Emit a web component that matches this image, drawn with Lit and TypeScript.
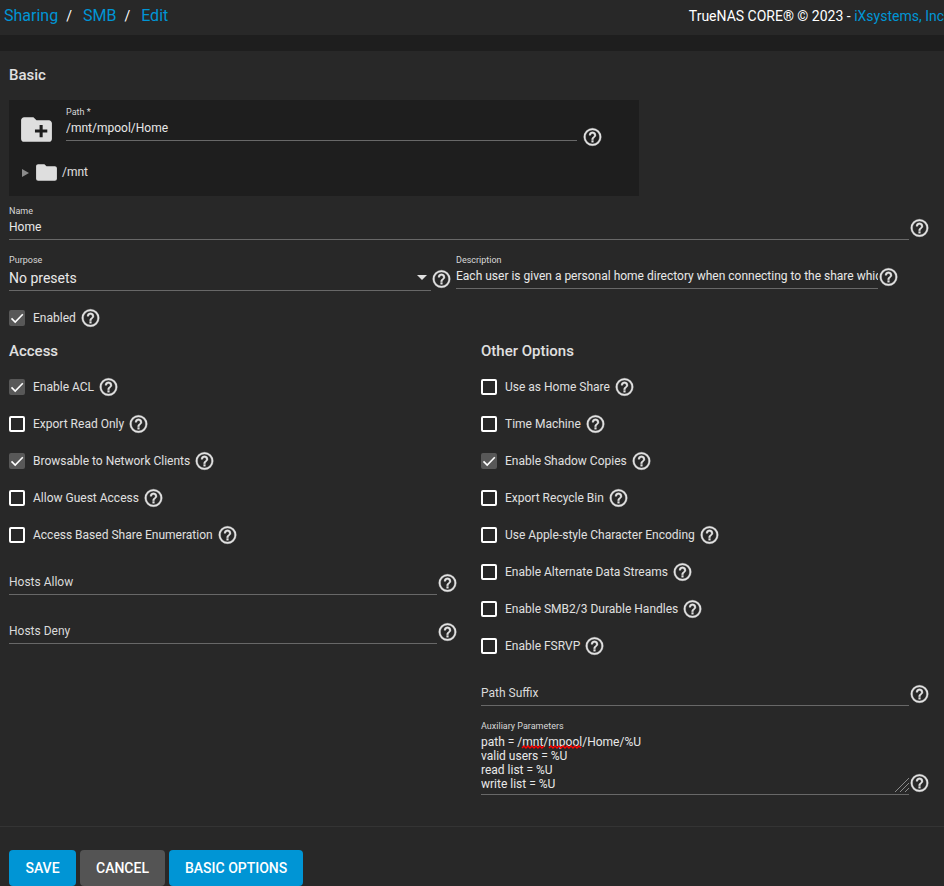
import { LitElement, html, svg, css, nothing } from "lit";
import { customElement, property, state } from "lit/decorators.js";

const PLUS = "M19,14H16V17H14V14H11V12H14V9H16V12H19V14Z";
const FOLDER = "M10,4H4C2.89,4 2,4.89 2,6V18A2,2 0 0,0 4,20H20A2,2 0 0,0 22,18V8C22,6.89 21.1,6 20,6H12L10,4Z";
const HELP =
  "M11,18H13V16H11V18M12,2A10,10 0 0,0 2,12A10,10 0 0,0 12,22A10,10 0 0,0 22,12A10,10 0 0,0 12,2M12,20C7.59,20 4,16.41 4,12C4,7.59 7.59,4 12,4C16.41,4 20,7.59 20,12C20,16.41 16.41,20 12,20M12,6A4,4 0 0,0 8,10H10A2,2 0 0,1 12,8A2,2 0 0,1 14,10C14,12 11,11.75 11,15H13C13,12.75 16,12.5 16,10A4,4 0 0,0 12,6Z";

interface Option {
  id: string;
  label: string;
  checked: boolean;
}

@customElement("help-tip")
export class HelpTip extends LitElement {
  @property() topic = "";

  static styles = css`
    :host {
      display: block;
      flex: none;
    }
    .help {
      display: block;
      padding: 0;
      border: 0;
      background: none;
      color: #e2e2e2;
      cursor: pointer;
    }
    .icon {
      display: block;
      width: 21px;
      height: 22px;
      fill: currentColor;
      stroke: currentColor;
      stroke-width: 0.4;
    }
  `;

  render() {
    return html`<button class="help" type="button" aria-label="Help: ${this.topic}">
      <svg class="icon" viewBox="0 0 24 24" aria-hidden="true"><path d=${HELP} /></svg>
    </button>`;
  }
}

@customElement("app-root")
export class AppRoot extends LitElement {
  @state() private access: Option[] = [
    { id: "acl", label: "Enable ACL", checked: true },
    { id: "ro", label: "Export Read Only", checked: false },
    { id: "browsable", label: "Browsable to Network Clients", checked: true },
    { id: "guest", label: "Allow Guest Access", checked: false },
    { id: "abe", label: "Access Based Share Enumeration", checked: false },
  ];

  @state() private other: Option[] = [
    { id: "home", label: "Use as Home Share", checked: false },
    { id: "timemachine", label: "Time Machine", checked: false },
    { id: "shadow", label: "Enable Shadow Copies", checked: true },
    { id: "recycle", label: "Export Recycle Bin", checked: false },
    { id: "apple", label: "Use Apple-style Character Encoding", checked: false },
    { id: "streams", label: "Enable Alternate Data Streams", checked: false },
    { id: "durable", label: "Enable SMB2/3 Durable Handles", checked: false },
    { id: "fsrvp", label: "Enable FSRVP", checked: false },
  ];

  static styles = css`
    :host {
      display: flex;
      flex-direction: column;
      min-height: 100vh;
      overflow: hidden;
      background: #1e1e1e;
      color: #e0e0e0;
      font-family: Roboto, "Liberation Sans", sans-serif;
      font-size: 12px;
    }
    .topbar {
      display: flex;
      justify-content: space-between;
      align-items: center;
      height: 35px;
      padding-left: 4px;
      margin-bottom: 16px;
      background: #282828;
      white-space: nowrap;
    }
    .crumbs {
      display: flex;
      gap: 11px;
      padding-bottom: 4px;
      font-size: 16px;
      line-height: 20px;
      color: #fff;
    }
    .crumb {
      display: flex;
      align-items: baseline;
      gap: 8px;
    }
    .slash {
      font-size: 14px;
    }
    a {
      color: #0095d5;
      text-decoration: none;
    }
    .copyright {
      padding-bottom: 4px;
      font-size: 14px;
      line-height: 20px;
      color: #fff;
    }
    .card {
      flex: 1;
      background: #282828;
    }
    .body {
      padding: 14px 14px 31px 9px;
    }
    h2 {
      margin: 0 0 15px;
      font-size: 15px;
      font-weight: 500;
      line-height: 20px;
    }
    .explorer {
      box-sizing: border-box;
      width: 100%;
      max-width: 630px;
      padding: 7px 36px 11px 9px;
      margin-bottom: 10px;
      background: #1e1e1e;
    }
    .path {
      display: flex;
      gap: 11px;
      align-items: flex-start;
    }
    .path .field {
      flex: 1;
      gap: 5px;
    }
    .add-folder,
    .toggle {
      display: block;
      padding: 0;
      border: 0;
      background: none;
    }
    .add-folder {
      padding-top: 4px;
    }
    .add-icon {
      display: block;
      width: 37px;
      height: 37px;
    }
    .tree {
      display: flex;
      align-items: center;
      gap: 3px;
      padding-left: 4px;
      margin-top: 12px;
      line-height: 25px;
    }
    .toggle {
      margin-right: 2px;
    }
    .arrow {
      display: block;
      width: 7px;
      height: 8px;
      fill: #8c8c8c;
    }
    .folder-icon {
      display: block;
      width: 25px;
      height: 25px;
    }
    .sheet {
      fill: #dedede;
    }
    .plus {
      fill: #1e1e1e;
    }
    .field {
      display: flex;
      align-items: flex-end;
      min-width: 0;
    }
    .field help-tip {
      margin-bottom: 1px;
    }
    .path .field help-tip {
      margin-bottom: -7px;
    }
    .control {
      position: relative;
      flex: 1;
      min-width: 0;
      border-bottom: 1px solid #686868;
    }
    .caption {
      display: block;
      height: 10px;
      font-size: 9px;
      line-height: 10px;
      color: #d8d8d8;
    }
    .text,
    .select,
    .area {
      display: block;
      box-sizing: border-box;
      width: 100%;
      margin: 0;
      padding: 0;
      border: 0;
      border-radius: 0;
      outline: none;
      appearance: none;
      background: none;
      color: #e8e8e8;
      font: inherit;
    }
    .text {
      height: 23px;
      padding-bottom: 1px;
    }
    .text::placeholder {
      color: #dadada;
      opacity: 1;
    }
    .select {
      height: 25px;
      font-size: 14px;
    }
    .caret {
      position: absolute;
      right: 4px;
      bottom: 10px;
      width: 10px;
      height: 5px;
      fill: #e0e0e0;
      pointer-events: none;
    }
    .area {
      height: 63px;
      padding-top: 4px;
      line-height: 14px;
      resize: none;
      overflow: hidden;
    }
    .squiggles {
      position: absolute;
      left: 0;
      top: 24px;
      width: 104px;
      height: 4px;
      fill: none;
      stroke: #f00;
      stroke-width: 1.4;
      pointer-events: none;
    }
    .grip {
      position: absolute;
      right: 0;
      bottom: 2px;
      width: 14px;
      height: 14px;
      stroke: #8a8a8a;
      pointer-events: none;
    }
    .pair {
      display: grid;
      grid-template-columns: 1fr 1fr;
      align-items: start;
      gap: 4px;
      margin: 15px 31px 16px 0;
    }
    .check {
      display: flex;
      align-items: center;
      gap: 4px;
      height: 22px;
    }
    .check label {
      display: flex;
      align-items: center;
      gap: 8px;
      white-space: nowrap;
    }
    .box {
      display: grid;
      place-items: center;
    }
    .box input,
    .tick {
      grid-area: 1 / 1;
    }
    .box input {
      box-sizing: border-box;
      width: 16px;
      height: 16px;
      margin: 0;
      appearance: none;
      border: 2px solid #fff;
      border-radius: 2px;
    }
    .box input:checked {
      border-color: #585858;
      background: #585858;
    }
    .tick {
      width: 16px;
      height: 16px;
      fill: none;
      stroke: #fff;
      stroke-width: 1.6;
      visibility: hidden;
      pointer-events: none;
    }
    .box input:checked + .tick {
      visibility: visible;
    }
    .columns {
      display: grid;
      grid-template-columns: 1fr 1fr;
      gap: 23px;
      margin-top: 12px;
    }
    .checks {
      display: grid;
      gap: 15px;
      margin-bottom: 25px;
    }
    .fields {
      display: grid;
      gap: 25px;
    }
    .fields.tight {
      gap: 15px;
    }
    .actions {
      display: flex;
      gap: 4px;
      padding: 23px 9px 0;
      border-top: 1px solid #343434;
    }
    .btn {
      min-width: 67px;
      height: 36px;
      padding: 0 16px;
      border: 0;
      border-radius: 4px;
      background: #0095d5;
      color: #fff;
      font: 500 14px Roboto, "Liberation Sans", sans-serif;
      cursor: pointer;
    }
    .btn.plain {
      background: #545454;
    }
  `;

  private toggle(o: Option) {
    o.checked = !o.checked;
    this.requestUpdate();
  }

  private check(o: Option) {
    return html`<div class="check">
      <label for=${o.id}>
        <span class="box">
          <input id=${o.id} type="checkbox" .checked=${o.checked} @change=${() => this.toggle(o)} />
          <svg class="tick" viewBox="0 0 16 16" aria-hidden="true"><path d="M2.5 8.4 6.2 12 13.8 4.2" /></svg>
        </span>
        ${o.label}
      </label>
      <help-tip .topic=${o.label}></help-tip>
    </div>`;
  }

  private field(id: string, label: string, value: string) {
    return html`<div class="field">
      <div class="control">
        ${value ? html`<label class="caption" for=${id}>${label}</label>` : nothing}
        <input
          class="text"
          id=${id}
          type="text"
          .value=${value}
          placeholder=${value ? nothing : label}
          aria-label=${label.replace(" *", "")}
        />
      </div>
      <help-tip .topic=${label}></help-tip>
    </div>`;
  }

  private wave(from: number, to: number) {
    let d = `M${from} 3`;
    for (let x = from + 2, up = true; x <= to; x += 2, up = !up) d += `L${x} ${up ? 1 : 3}`;
    return svg`<path d=${d} />`;
  }

  private enabled: Option = { id: "enabled", label: "Enabled", checked: true };

  render() {
    return html`
      <header class="topbar">
        <nav class="crumbs" aria-label="Breadcrumb">
          <span class="crumb"><a href="#sharing">Sharing</a><span class="slash">/</span></span>
          <span class="crumb"><a href="#smb">SMB</a><span class="slash">/</span></span>
          <span class="crumb"><a href="#edit">Edit</a></span>
        </nav>
        <div class="copyright">TrueNAS CORE® © 2023 - <a href="#ix">iXsystems, Inc</a></div>
      </header>
      <main class="card">
        <div class="body">
          <h2>Basic</h2>
          <div class="explorer">
            <div class="path">
              <button class="add-folder" type="button" aria-label="Add folder">
                <svg class="add-icon" viewBox="0 0 24 24" aria-hidden="true">
                  <path class="sheet" d=${FOLDER} /><path class="plus" d=${PLUS} />
                </svg>
              </button>
              ${this.field("path", "Path *", "/mnt/mpool/Home")}
            </div>
            <div class="tree">
              <button class="toggle" type="button" aria-label="Expand /mnt">
                <svg class="arrow" viewBox="0 0 7 8" aria-hidden="true"><path d="M0 0 7 4 0 8Z" /></svg>
              </button>
              <svg class="folder-icon" viewBox="0 0 24 24" aria-hidden="true"><path class="sheet" d=${FOLDER} /></svg>
              <span>/mnt</span>
            </div>
          </div>
          ${this.field("name", "Name", "Home")}
          <div class="pair">
            <div class="field">
              <div class="control">
                <label class="caption" for="purpose">Purpose</label>
                <select class="select" id="purpose">
                  <option>No presets</option>
                </select>
                <svg class="caret" viewBox="0 0 10 5" aria-hidden="true"><path d="M0 0H10L5 5Z" /></svg>
              </div>
              <help-tip topic="Purpose"></help-tip>
            </div>
            ${this.field(
              "description",
              "Description",
              "Each user is given a personal home directory when connecting to the share which is not accessible by other users."
            )}
          </div>
          ${this.check(this.enabled)}
          <div class="columns">
            <section>
              <h2>Access</h2>
              <div class="checks">${this.access.map((o) => this.check(o))}</div>
              <div class="fields">
                ${this.field("allow", "Hosts Allow", "")} ${this.field("deny", "Hosts Deny", "")}
              </div>
            </section>
            <section>
              <h2>Other Options</h2>
              <div class="checks">${this.other.map((o) => this.check(o))}</div>
              <div class="fields tight">
                ${this.field("suffix", "Path Suffix", "")}
                <div class="field">
                  <div class="control">
                    <label class="caption" for="aux">Auxiliary Parameters</label>
                    <textarea
                      class="area"
                      id="aux"
                      spellcheck="false"
                      .value=${"path = /mnt/mpool/Home/%U\nvalid users = %U\nread list = %U\nwrite list = %U"}
                    ></textarea>
                    <svg class="squiggles" viewBox="0 0 104 4" aria-hidden="true">
                      ${this.wave(41, 63)}${this.wave(68, 101)}
                    </svg>
                    <svg class="grip" viewBox="0 0 14 14" aria-hidden="true">
                      <path d="M0 14 14 0M5 14 14 5M10 14 14 10" />
                    </svg>
                  </div>
                  <help-tip topic="Auxiliary Parameters"></help-tip>
                </div>
              </div>
            </section>
          </div>
        </div>
        <div class="actions">
          <button class="btn" type="button">SAVE</button>
          <button class="btn plain" type="button">CANCEL</button>
          <button class="btn" type="button">BASIC OPTIONS</button>
        </div>
      </main>
    `;
  }
}
